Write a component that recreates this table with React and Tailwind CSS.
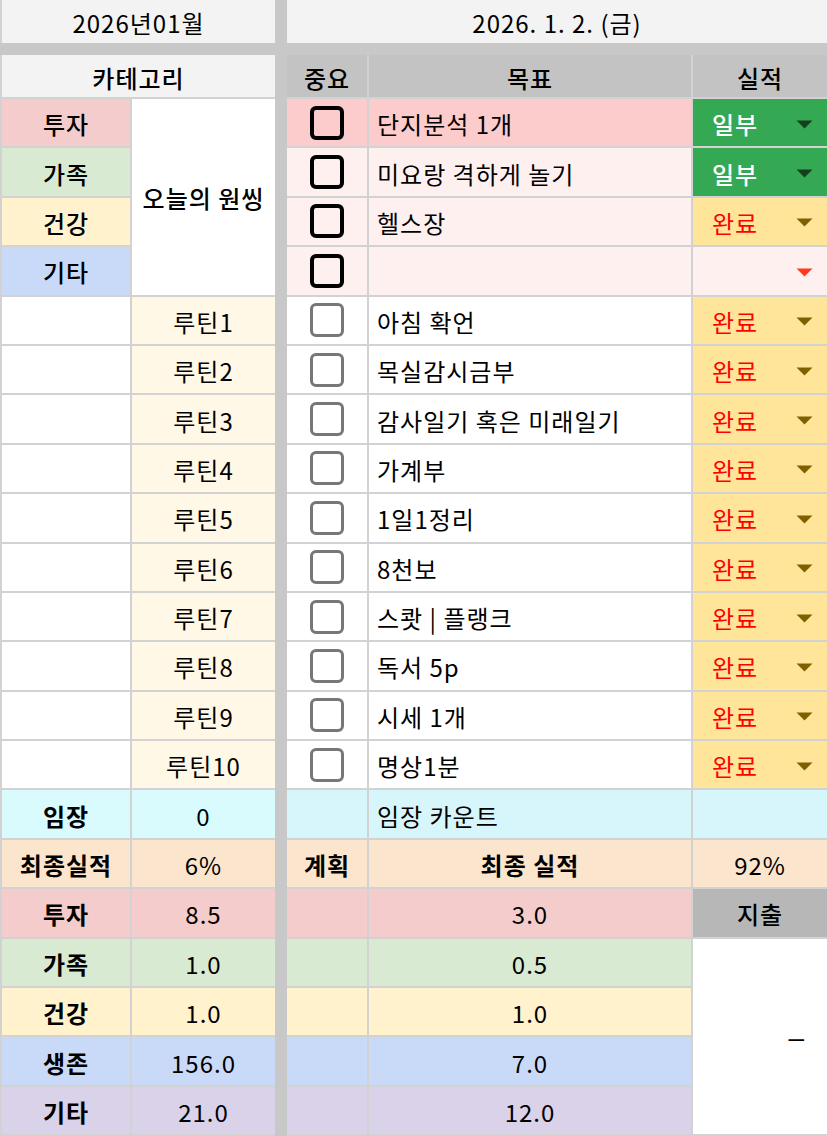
import React from "react";

const categories = [
  { label: "투자", bg: "bg-[#f4cccc]" },
  { label: "가족", bg: "bg-[#d9ead3]" },
  { label: "건강", bg: "bg-[#fff2cc]" },
  { label: "기타", bg: "bg-[#c9daf8]" },
];

const important = [
  { text: "단지분석 1개", bg: "bg-[#fccbcb]", status: "part" },
  { text: "미요랑 격하게 놀기", bg: "bg-[#fff0f0]", status: "part" },
  { text: "헬스장", bg: "bg-[#fff0f0]", status: "done" },
  { text: "", bg: "bg-[#fff0f0]", status: "empty" },
];

const routines = [
  "아침 확언",
  "목실감시금부",
  "감사일기 혹은 미래일기",
  "가계부",
  "1일1정리",
  "8천보",
  "스쾃 | 플랭크",
  "독서 5p",
  "시세 1개",
  "명상1분",
];

const summary = [
  { label: "투자", bg: "bg-[#f4cccc]", plan: "8.5", actual: "3.0" },
  { label: "가족", bg: "bg-[#d9ead3]", plan: "1.0", actual: "0.5" },
  { label: "건강", bg: "bg-[#fff2cc]", plan: "1.0", actual: "1.0" },
  { label: "생존", bg: "bg-[#c9daf8]", plan: "156.0", actual: "7.0" },
  { label: "기타", bg: "bg-[#d9d2e9]", plan: "21.0", actual: "12.0" },
];

const Cell = ({ className = "", children }) => (
  <div className={`flex items-center justify-center pt-[3px] ${className}`}>
    {children}
  </div>
);

const Checkbox = ({ strong }) => (
  <div
    className={
      strong
        ? "w-[34px] h-[34px] rounded-[6px] border-[4px] border-black"
        : "w-[34px] h-[34px] rounded-[6px] border-[3.5px] border-[#777777]"
    }
  />
);

const Arrow = ({ color }) => (
  <svg width="17" height="9" viewBox="0 0 17 9" className={color}>
    <path d="M0.5 0.5h16L8.5 8.5z" fill="currentColor" />
  </svg>
);

const Status = ({ kind }) => {
  if (kind === "part") {
    return (
      <div className="flex items-center justify-between pl-[19px] pr-[14px] pt-[3px] bg-[#34a853]">
        <span className="text-white font-medium">일부</span>
        <Arrow color="text-[#163f20]" />
      </div>
    );
  }
  if (kind === "done") {
    return (
      <div className="flex items-center justify-between pl-[19px] pr-[14px] pt-[3px] bg-[#ffe59a]">
        <span className="text-[#ff0000]">완료</span>
        <Arrow color="text-[#7f6000]" />
      </div>
    );
  }
  return (
    <div className="flex items-center justify-end pr-[14px] pt-[3px] bg-[#fff0f0]">
      <Arrow color="text-[#ff3b1f]" />
    </div>
  );
};

const LeftPanel = () => (
  <div className="w-[275px] pl-[2px] bg-[#d2d2d2] grid grid-cols-[128px_143px] grid-rows-[42px_repeat(21,47.4px)] gap-[2px] content-start">
    <Cell className="col-span-2 bg-[#f3f3f3] font-medium">카테고리</Cell>
    {categories.map((c, i) => (
      <React.Fragment key={c.label}>
        <Cell className={`${c.bg} font-medium`}>{c.label}</Cell>
        {i === 0 && (
          <Cell className="row-span-4 bg-white font-medium">오늘의 원씽</Cell>
        )}
      </React.Fragment>
    ))}
    {routines.map((r, i) => (
      <React.Fragment key={r}>
        <Cell className="bg-white" />
        <Cell className="bg-[#fff8e6]">루틴{i + 1}</Cell>
      </React.Fragment>
    ))}
    <Cell className="bg-[#dafbfe] font-bold">임장</Cell>
    <Cell className="bg-[#dafbfe]">0</Cell>
    <Cell className="bg-[#fce5cd] font-bold">최종실적</Cell>
    <Cell className="bg-[#fce5cd]">6%</Cell>
    {summary.map((s) => (
      <React.Fragment key={s.label}>
        <Cell className={`${s.bg} font-bold`}>{s.label}</Cell>
        <Cell className={s.bg}>{s.plan}</Cell>
      </React.Fragment>
    ))}
  </div>
);

const RightPanel = () => (
  <div className="flex-1 bg-[#d2d2d2] grid grid-cols-[80px_322px_1fr] grid-rows-[42px_repeat(21,47.4px)] gap-[2px] content-start">
    <Cell className="bg-[#c3c3c3] font-medium">중요</Cell>
    <Cell className="bg-[#c3c3c3] font-medium">목표</Cell>
    <Cell className="bg-[#c3c3c3] font-medium">실적</Cell>

    {important.map((row, i) => (
      <React.Fragment key={i}>
        <div className={`flex items-center justify-center ${row.bg}`}>
          <Checkbox strong />
        </div>
        <div className={`flex items-center pl-[8px] pt-[3px] ${row.bg}`}>
          {row.text}
        </div>
        <Status kind={row.status} />
      </React.Fragment>
    ))}

    {routines.map((r) => (
      <React.Fragment key={r}>
        <div className="flex items-center justify-center bg-white">
          <Checkbox />
        </div>
        <div className="flex items-center pl-[8px] pt-[3px] bg-white">{r}</div>
        <Status kind="done" />
      </React.Fragment>
    ))}

    <Cell className="bg-[#d7f6fb]" />
    <div className="flex items-center pl-[8px] pt-[3px] bg-[#d7f6fb]">임장 카운트</div>
    <Cell className="bg-[#d7f6fb]" />

    <Cell className="bg-[#fce5cd] font-bold">계획</Cell>
    <Cell className="bg-[#fce5cd] font-bold">최종 실적</Cell>
    <Cell className="bg-[#fce5cd]">92%</Cell>

    {summary.map((s, i) => (
      <React.Fragment key={s.label}>
        <Cell className={s.bg} />
        <Cell className={s.bg}>{s.actual}</Cell>
        {i === 0 && <Cell className="bg-[#b7b7b7] font-medium">지출</Cell>}
        {i === 1 && (
          <div className="row-span-4 flex items-center justify-end pr-[22px] pt-[3px] bg-white font-['Liberation_Sans',sans-serif] text-[28px]">
            –
          </div>
        )}
      </React.Fragment>
    ))}
  </div>
);

export default function App() {
  return (
    <div className="w-[827px] h-[1136px] overflow-hidden bg-[#c8c8c8] flex flex-col gap-[12px] text-[24px] leading-none tracking-[1px] text-black font-['Noto_Sans_CJK_KR','Noto_Sans',sans-serif]">
      <div className="h-[43px] flex gap-[12px]">
        <div className="w-[275px] pl-[2px] bg-[#d2d2d2]">
          <Cell className="h-full bg-[#f3f3f3]">2026년01월</Cell>
        </div>
        <Cell className="flex-1 bg-[#f3f3f3]">2026. 1. 2. (금)</Cell>
      </div>
      <div className="flex-1 flex gap-[12px]">
        <LeftPanel />
        <RightPanel />
      </div>
    </div>
  );
}
